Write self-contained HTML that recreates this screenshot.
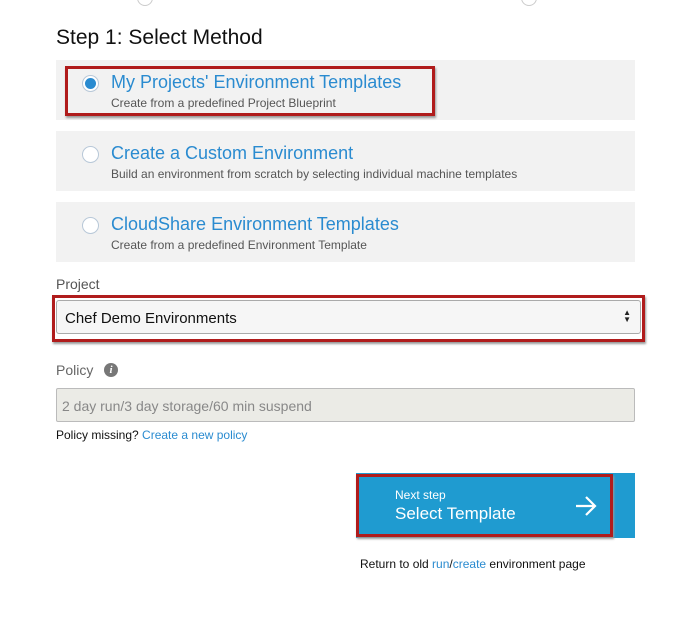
<!DOCTYPE html>
<html><head><style>
body{margin:0;width:681px;height:623px;background:#fff;position:relative;overflow:hidden;font-family:"Liberation Sans",sans-serif;}
.a{position:absolute}
.panel{position:absolute;left:56px;width:579px;height:60px;background:#f2f2f2}
.radio{position:absolute;left:26px;top:15px;width:15px;height:15px;border:1px solid #b8c8d8;border-radius:50%;background:#fff}
.t{position:absolute;left:55px;top:12px;font-size:18px;color:#2a8bd0}
.s{position:absolute;left:55px;top:36px;font-size:12px;color:#555}
.red{position:absolute;border:3px solid #b01c1c;box-sizing:border-box}
</style></head><body>
<div class="a" style="left:137px;top:-10px;width:14px;height:14px;border:1px solid #ccc;border-radius:50%"></div>
<div class="a" style="left:521px;top:-10px;width:14px;height:14px;border:1px solid #ccc;border-radius:50%"></div>
<div class="a" style="left:56px;top:26px;font-size:21px;color:#111">Step 1: Select Method</div>
<div class="panel" style="top:60px"><div class="radio"><div class="a" style="left:2px;top:2px;width:11px;height:11px;border-radius:50%;background:#2a8bd0"></div></div><div class="t">My Projects' Environment Templates</div><div class="s">Create from a predefined Project Blueprint</div></div>
<div class="red" style="left:65px;top:66px;width:370px;height:50px;box-shadow:1px 2px 2px #999"></div>
<div class="panel" style="top:131px"><div class="radio"></div><div class="t">Create a Custom Environment</div><div class="s">Build an environment from scratch by selecting individual machine templates</div></div>
<div class="panel" style="top:202px"><div class="radio"></div><div class="t">CloudShare Environment Templates</div><div class="s">Create from a predefined Environment Template</div></div>
<div class="a" style="left:56px;top:276px;font-size:14px;color:#555">Project</div>
<div class="red" style="left:52px;top:295px;width:593px;height:47px;box-shadow:1px 2px 2px #999"></div>
<div class="a" style="left:56px;top:300px;width:585px;height:34px;box-sizing:border-box;border:1px solid #aaa;border-radius:3px;background:#f6f6f6"><div class="a" style="left:8px;top:9px;font-size:15px;color:#111">Chef Demo Environments</div><div class="a" style="right:9px;top:8px;font-size:8px;line-height:7px;color:#222">▲<br>▼</div></div>
<div class="a" style="left:56px;top:362px;font-size:14px;color:#666">Policy</div>
<div class="a" style="left:104px;top:363px;width:14px;height:14px;border-radius:50%;background:#777;color:#fff;font-size:11px;font-style:italic;font-weight:bold;text-align:center;line-height:14px;font-family:'Liberation Serif',serif">i</div>
<div class="a" style="left:56px;top:388px;width:579px;height:34px;box-sizing:border-box;border:1px solid #bbb;border-radius:2px;background:#ebebe6"><div class="a" style="left:5px;top:9px;font-size:14px;color:#888">2 day run/3 day storage/60 min suspend</div></div>
<div class="a" style="left:56px;top:428px;font-size:12px;color:#111">Policy missing? <span style="color:#2a8bd0">Create a new policy</span></div>
<div class="a" style="left:356px;top:473px;width:279px;height:65px;background:#1f9bd0"></div>
<div class="red" style="left:356px;top:474px;width:257px;height:63px;box-shadow:1px 2px 2px #999"></div>
<div class="a" style="left:395px;top:488px;font-size:12px;color:#fff">Next step</div>
<div class="a" style="left:395px;top:504px;font-size:17px;color:#fff">Select Template</div>
<svg class="a" style="left:575px;top:496px" width="22" height="20"><path d="M1 10H20M11 1L20 10L11 19" stroke="#fff" stroke-width="2.2" fill="none"/></svg>
<div class="a" style="left:360px;top:557px;font-size:12px;color:#111">Return to old <span style="color:#2a8bd0">run</span>/<span style="color:#2a8bd0">create</span> environment page</div>
</body></html>
